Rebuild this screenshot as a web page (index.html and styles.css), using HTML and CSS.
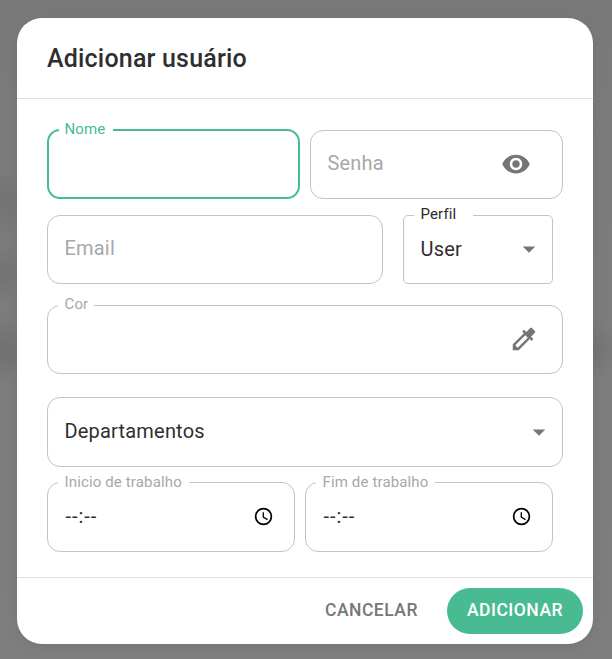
FILE: index.html
```html
<!DOCTYPE html>
<html lang="pt-BR">
<head>
<meta charset="utf-8">
<title>Adicionar usuário</title>
<link rel="stylesheet" href="styles.css">
</head>
<body>
<main class="dialog">
  <header class="dialog-header"><h1 class="title">Adicionar usuário</h1></header>
  <section class="dialog-body">
    <div class="row row-access">
      <div class="field focused"><span class="label label-name">Nome</span></div>
      <div class="field"><span class="placeholder">Senha</span>
        <svg class="icon icon-eye" viewBox="0 0 24 24"><path d="M12 4.5C7 4.5 2.73 7.61 1 12c1.73 4.39 6 7.5 11 7.5s9.27-3.11 11-7.5c-1.73-4.39-6-7.5-11-7.5zM12 17c-2.76 0-5-2.24-5-5s2.24-5 5-5 5 2.24 5 5-2.24 5-5 5zm0-8c-1.66 0-3 1.34-3 3s1.34 3 3 3 3-1.34 3-3-1.34-3-3-3z"/></svg>
      </div>
    </div>
    <div class="row row-profile">
      <div class="field"><span class="placeholder">Email</span></div>
      <div class="field square"><span class="label label-profile">Perfil</span><span class="value value-user">User</span>
        <svg class="icon icon-arrow" viewBox="0 0 24 24"><path d="M7 10l5 5 5-5z"/></svg>
      </div>
    </div>
    <div class="row row-color">
      <div class="field"><span class="label label-color">Cor</span>
        <svg class="icon icon-picker" viewBox="0 0 24 24"><path d="M20.71 5.63l-2.34-2.34c-.39-.39-1.02-.39-1.41 0l-3.12 3.12-1.93-1.91-1.41 1.41 1.42 1.42L3 16.25V21h4.75l8.92-8.92 1.42 1.42 1.41-1.41-1.92-1.92 3.12-3.12c.4-.4.4-1.03.01-1.42zM6.92 19L5 17.08l8.06-8.06 1.92 1.92L6.92 19z"/></svg>
      </div>
    </div>
    <div class="row row-department">
      <div class="field"><span class="value">Departamentos</span>
        <svg class="icon icon-arrow" viewBox="0 0 24 24"><path d="M7 10l5 5 5-5z"/></svg>
      </div>
    </div>
    <div class="row row-hours">
      <div class="field"><span class="label label-start">Inicio de trabalho</span><span class="time">--:--</span>
        <svg class="icon icon-clock" viewBox="0 0 24 24"><path d="M12 2a10 10 0 1 0 0 20 10 10 0 0 0 0-20zm0 18a8 8 0 1 1 0-16 8 8 0 0 1 0 16zm.5-13H11v6l5.2 3.2.8-1.3-4.5-2.7z"/></svg>
      </div>
      <div class="field"><span class="label label-end">Fim de trabalho</span><span class="time">--:--</span>
        <svg class="icon icon-clock" viewBox="0 0 24 24"><path d="M12 2a10 10 0 1 0 0 20 10 10 0 0 0 0-20zm0 18a8 8 0 1 1 0-16 8 8 0 0 1 0 16zm.5-13H11v6l5.2 3.2.8-1.3-4.5-2.7z"/></svg>
      </div>
    </div>
  </section>
  <footer class="dialog-footer">
    <button class="button cancel">CANCELAR</button>
    <button class="button submit">ADICIONAR</button>
  </footer>
</main>
</body>
</html>
```
FILE: styles.css
```css
* { box-sizing: border-box; }

body {
  margin: 0;
  height: 659px;
  padding: 18px 19px 15px 17px;
  overflow: hidden;
  font-family: Roboto, "Liberation Sans", sans-serif;
  letter-spacing: 0.19px;
  background:
    radial-gradient(ellipse 34px 34px at 0 202px, rgba(0, 0, 0, .08), transparent),
    radial-gradient(ellipse 34px 30px at 0 274px, rgba(0, 0, 0, .08), transparent),
    radial-gradient(ellipse 34px 34px at 0 350px, rgba(0, 0, 0, .1), transparent),
    radial-gradient(ellipse 28px 30px at 593px 350px, rgba(0, 0, 0, .08), transparent),
    linear-gradient(#797979, #7b7b7b 130px, #7e7e7e);
}

.dialog {
  display: flex;
  flex-direction: column;
  height: 626px;
  border-radius: 25px;
  background: #fff;
  box-shadow: 0 2px 14px rgba(0, 0, 0, .07);
}

.dialog-header {
  height: 81px;
  padding: 21px 30px 19px;
  border-bottom: 1px solid #dfdfdf;
}

.title {
  margin: 0;
  font-size: 25px;
  line-height: 40px;
  font-weight: 500;
  color: #2f2f2f;
}

.dialog-body {
  height: 478px;
  padding: 31px 30px 0;
}

.row { display: grid; }
.row-access { grid-template-columns: 253px 253px; gap: 10px; }
.row-profile { grid-template-columns: 336px 150px; gap: 20px; margin-top: 16px; }
.row-color { margin-top: 21px; }
.row-department { margin-top: 23px; }
.row-hours { grid-template-columns: 248px 248px; gap: 10px; margin-top: 15px; }

.field {
  position: relative;
  display: flex;
  align-items: center;
  justify-content: space-between;
  height: 69px;
  padding: 0 17px 0 16.5px;
  border: 1px solid #c4c4c4;
  border-radius: 13px;
  font-size: 20px;
  line-height: 28px;
}

.row-department .field, .row-hours .field { height: 70px; }
.focused { height: 70px; margin-top: -1px; border: 2px solid #49bb92; }
.square { border-radius: 5px; }

.label {
  position: absolute;
  left: 10px;
  top: -10px;
  height: 18px;
  padding-left: 6.5px;
  background: #fff;
  color: #a8a8a8;
  font-size: 15px;
  line-height: 18px;
  letter-spacing: 0.14px;
  white-space: nowrap;
}

.label-name { width: 54px; top: -11px; padding-left: 5.5px; color: #49bb92; }
.label-profile { width: 59px; top: -11px; color: #2b2b2b; }
.label-color { width: 36px; top: -11px; }
.label-start { width: 131px; }
.label-end { width: 119px; }

.placeholder { color: #a8a8a8; padding-bottom: 3px; }
.value { color: #2f2f2f; padding-bottom: 1px; }
.row-department .value { padding-bottom: 3px; }

.icon { flex: none; width: 30px; height: 30px; fill: #757575; }
.icon-eye { margin-right: 14px; margin-bottom: 2px; }
.icon-picker { margin-left: auto; margin-right: 6px; margin-bottom: 2px; }
.icon-arrow { margin-right: -9px; }
.square .icon-arrow { margin-bottom: 2px; }
.icon-clock { width: 21px; height: 21px; margin-right: 3.5px; margin-bottom: 1px; fill: #000; }
.time { color: #2f2f2f; letter-spacing: 0.95px; padding-left: 1px; padding-bottom: 2px; }

.dialog-footer {
  display: flex;
  align-items: center;
  justify-content: flex-end;
  gap: 10px;
  height: 67px;
  padding: 0 10px;
  border-top: 1px solid #dfdfdf;
}

.button {
  height: 46px;
  padding: 0 0 2px;
  border: 0;
  border-radius: 23px;
  background: none;
  font: 500 17.5px/30px Roboto, "Liberation Sans", sans-serif;
  letter-spacing: .5px;
}

.cancel { width: 131px; color: #777; }
.submit { width: 136px; color: #fff; background: #49bb92; }
```
